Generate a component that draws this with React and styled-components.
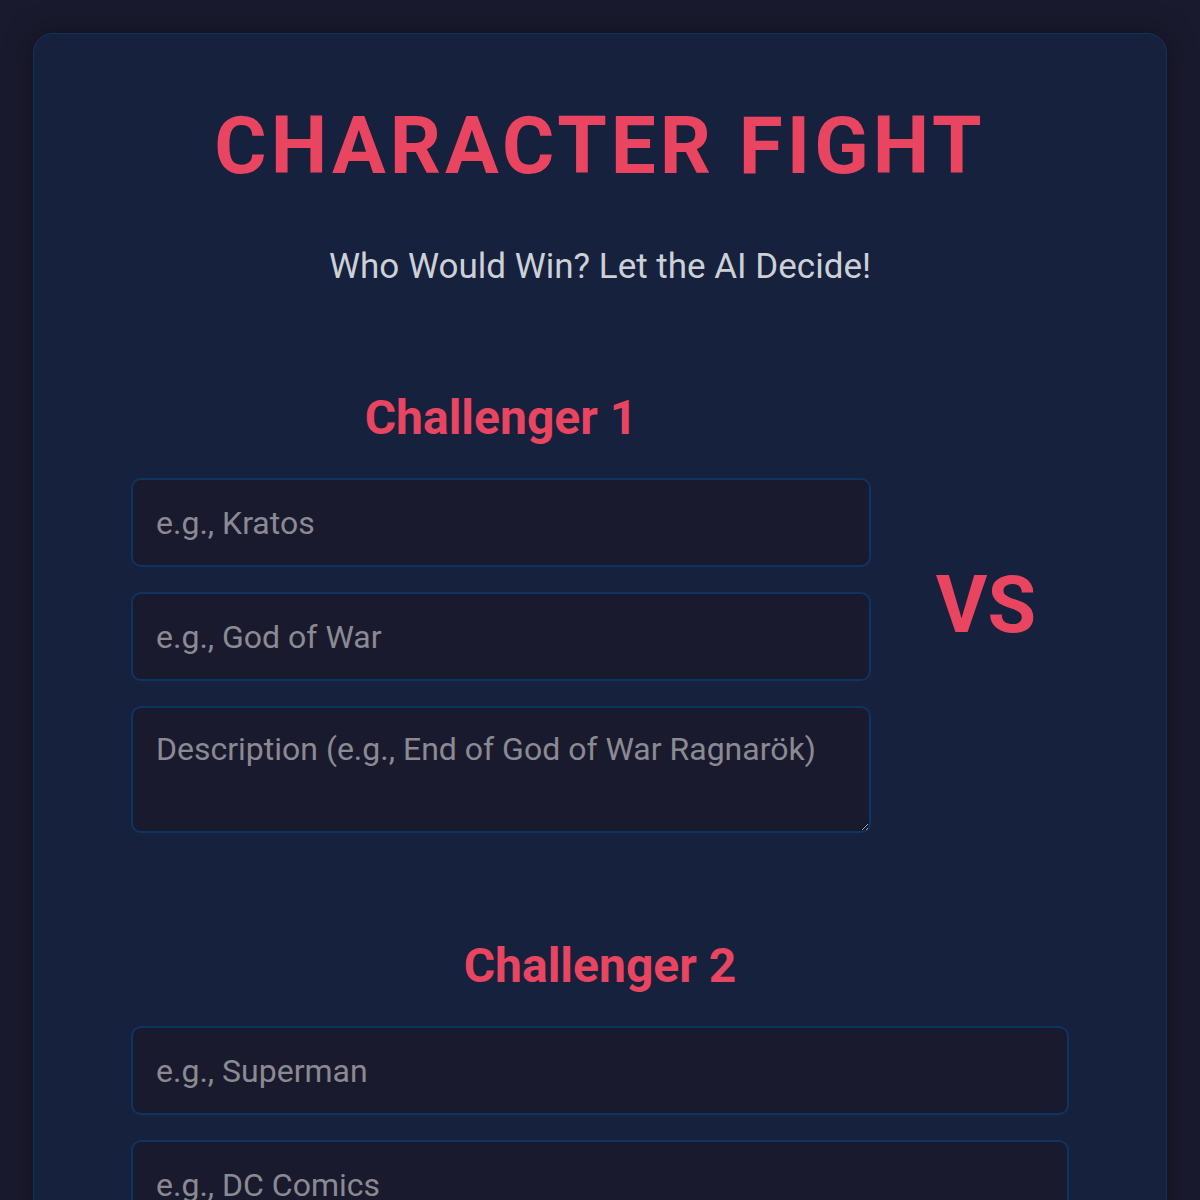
import React from 'react';
import styled, { createGlobalStyle } from 'styled-components';

const GlobalStyle = createGlobalStyle`
  * { box-sizing: border-box; }
  html, body {
    margin: 0;
    padding: 0;
    background-color: #1a1a2e;
    font-family: Roboto, "Liberation Sans", Arial, sans-serif;
  }
`;

const Page = styled.div`
  padding: 33px;
  min-height: 1200px;
`;

const Card = styled.div`
  background-color: #16213e;
  border: 1px solid #0f3460;
  border-radius: 20px;
  padding: 65px 97px 80px;
  box-shadow: 0 0 30px rgba(0, 0, 0, 0.35);
`;

const Title = styled.h1`
  margin: 0;
  text-align: center;
  color: #e94560;
  font-size: 80px;
  font-weight: 700;
  line-height: 94px;
  letter-spacing: 4px;
`;

const Subtitle = styled.p`
  margin: 54px 0 0;
  text-align: center;
  color: #cdd0d6;
  font-size: 35px;
  line-height: 40px;
`;

const Arena = styled.div`
  margin-top: 89px;
  display: grid;
  grid-template-columns: 740px 1fr;
  column-gap: 32px;
  row-gap: 91px;
`;

const Fighter = styled.section`
  grid-column: ${({ wide }) => (wide ? '1 / -1' : 'auto')};
  display: flex;
  flex-direction: column;
  padding-top: 14px;
`;

const FighterName = styled.h2`
  margin: 0 0 32px;
  text-align: center;
  color: #e94560;
  font-size: 48px;
  font-weight: 700;
  line-height: 56px;
`;

const Fields = styled.div`
  display: flex;
  flex-direction: column;
  gap: 25px;
`;

const fieldStyle = `
  width: 100%;
  background-color: #1a1a2e;
  border: 2px solid #0f3460;
  border-radius: 10px;
  color: #e8e8e8;
  font-family: Roboto, "Liberation Sans", Arial, sans-serif;
  font-size: 32px;
  padding: 0 23px;
  outline: none;
  &::placeholder { color: #8a8a92; }
`;

const Field = styled.input`
  ${fieldStyle}
  height: 89px;
`;

const Notes = styled.textarea`
  ${fieldStyle}
  height: 127px;
  padding-top: 22px;
  line-height: 38px;
  resize: vertical;
  display: block;
`;

const Versus = styled.div`
  align-self: center;
  text-align: center;
  color: #e94560;
  font-size: 79px;
  font-weight: 700;
  line-height: 88px;
`;

const fighters = [
  { label: 'Challenger 1', name: 'e.g., Kratos', series: 'e.g., God of War', desc: 'Description (e.g., End of God of War Ragnarök)' },
  { label: 'Challenger 2', name: 'e.g., Superman', series: 'e.g., DC Comics', desc: 'Description (e.g., Post-Crisis Superman)' },
];

const FighterForm = ({ fighter, wide }) => (
  <Fighter wide={wide}>
    <FighterName>{fighter.label}</FighterName>
    <Fields>
      <Field placeholder={fighter.name} />
      <Field placeholder={fighter.series} />
      <Notes placeholder={fighter.desc} />
    </Fields>
  </Fighter>
);

const App = () => (
  <>
    <GlobalStyle />
    <Page>
      <Card>
        <Title>CHARACTER FIGHT</Title>
        <Subtitle>Who Would Win? Let the AI Decide!</Subtitle>
        <Arena>
          <FighterForm fighter={fighters[0]} />
          <Versus>VS</Versus>
          <FighterForm fighter={fighters[1]} wide />
        </Arena>
      </Card>
    </Page>
  </>
);

export default App;
